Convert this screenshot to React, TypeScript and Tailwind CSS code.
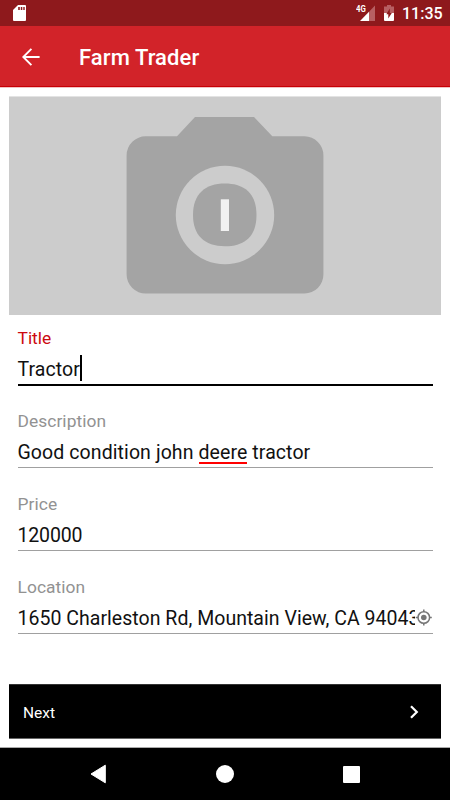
import React from "react";

function StatusBar() {
  return (
    <div className="flex h-[26px] shrink-0 items-start bg-[#8e191c] pl-[13px] pr-[9px]">
      <svg className="mt-[5px]" width="13" height="16" viewBox="0 0 13 16">
        <path d="M5 0H12Q13 0 13 1V15Q13 16 12 16H1Q0 16 0 15V5Z" fill="#fff" />
        <path d="M5.2 2H6.8V5H5.2ZM7.8 2H9.3V5H7.8ZM10.3 2H11.7V5H10.3Z" fill="#8e191c" />
      </svg>
      <div className="ml-auto flex">
        <div className="mt-[4px] w-[9px] shrink-0">
          <span className="block origin-left scale-x-[0.82] text-[9.5px] leading-[10px] font-bold">4G</span>
        </div>
        <svg className="-ml-[5px] mt-[5px]" width="15" height="16" viewBox="0 0 15 16">
          <path d="M15 0.5V16H9V6.7Z" fill="#b75f62" />
          <path d="M9 6.7V16H0Z" fill="#fff" />
        </svg>
        <svg className="ml-[9px] mt-[5px]" width="10" height="16" viewBox="0 0 10 16">
          <path d="M3 0H7V1.5H10V8H0V1.5H3Z" fill="#b75f62" />
          <path d="M0 8H10V15Q10 16 9 16H1Q0 16 0 15Z" fill="#fff" />
          <path d="M5.8 3.5V8H7.8L4.3 13.5V9.2H2.3Z" fill="#8e191c" />
        </svg>
        <span className="ml-[8px] mt-[4px] w-[39px] whitespace-nowrap text-[16px] leading-[20px] font-medium">11:35</span>
      </div>
    </div>
  );
}

function Header() {
  return (
    <header className="flex h-[61px] shrink-0 items-center border-b border-[#c70006] bg-[#d22329] pl-[22px] shadow-[0_1px_0_#f2c2c3]">
      <svg className="mt-px" width="18" height="18" viewBox="0 0 18 18" fill="none" stroke="#fff" strokeWidth="1.9">
        <path d="M17.6 9H1.2M9.4 .9L1.3 9L9.4 17.1" />
      </svg>
      <h1 className="ml-[39px] mt-[3px] whitespace-nowrap text-[22px] leading-[28px] font-medium tracking-[0.08px]">Farm Trader</h1>
    </header>
  );
}

function PhotoPlaceholder() {
  return (
    <div className="mx-[9px] mt-[10px] h-[218px] shrink-0 bg-[#ccc] shadow-[0_-1px_0_#e3e3e3]">
      <svg width="432" height="218" viewBox="9 97 432 218">
        <path
          d="M146 136.3H177L195 117H254L272.3 136.3H304.5A19 19 0 0 1 323.4 155.3V274.5A19 19 0 0 1 304.5 293.5H146A19 19 0 0 1 126.6 274.5V155.3A19 19 0 0 1 146 136.3Z"
          fill="#a4a4a4"
        />
        <circle cx="225" cy="215" r="49.2" fill="#ccc" />
        <path
          d="M225 183.5C245 183.5 256.5 194 256.5 215C256.5 235 246 246.2 225 246.2C204 246.2 193 235 193 215C193 194 205 183.5 225 183.5Z"
          fill="#a4a4a4"
        />
        <rect x="220.8" y="199.3" width="8.2" height="31.7" fill="#f1f1f1" />
      </svg>
    </div>
  );
}

function Field({ label, active = false, children }: { label: string; active?: boolean; children: React.ReactNode }) {
  return (
    <div className="h-[83px]">
      <div className={"h-[20px] text-[17.4px] leading-[20px] " + (active ? "text-[#cc0a10]" : "tracking-[0.05px] text-[#929292]")}>{label}</div>
      <div className={"mt-[7px] flex items-center text-[19.5px] leading-[28px] text-[#111] " + (active ? "h-[31px] border-b-2 border-black" : "h-[30px] border-b border-[#a0a0a0]")}>
        {children}
      </div>
    </div>
  );
}

export default function App() {
  return (
    <div className="flex h-[800px] w-[450px] flex-col overflow-hidden bg-white font-['Roboto',sans-serif] text-white">
      <StatusBar />
      <Header />
      <PhotoPlaceholder />
      <main className="mx-[17.5px] mt-[13px] h-[356px] shrink-0">
        <Field label="Title" active>
          <span className="tracking-[0.07px]">Tractor</span>
          <span className="-mt-[3px] h-[26px] w-[2px] bg-black" />
        </Field>
        <Field label="Description">
          <span className="whitespace-pre tracking-[0.09px]">
            Good condition john{" "}
            <span className="inline-block h-[25px] border-b-2 border-[#f00] align-top">deere</span>
            {" "}tractor
          </span>
        </Field>
        <Field label="Price"><span className="tracking-[-0.15px]">120000</span></Field>
        <Field label="Location">
          <span className="w-[397px] shrink-0 overflow-hidden whitespace-nowrap tracking-[0.03px]">1650 Charleston Rd, Mountain View, CA 94043</span>
          <svg className="-mt-[2px] shrink-0" width="17" height="17" viewBox="0 0 17 17" fill="none" stroke="#777" strokeWidth="1.5">
            <circle cx="8.8" cy="8.5" r="5.8" />
            <circle cx="8.8" cy="8.5" r="2.8" fill="#777" stroke="none" />
            <path d="M8.8 .5V3M8.8 14V16.5M.8 8.5H3.3M14.3 8.5H16.8" />
          </svg>
        </Field>
      </main>
      <button className="mx-[9px] flex h-[55px] shrink-0 items-center justify-between border-y border-t-[#333] border-b-[#666] bg-black pl-[14px] pr-[22px] text-left">
        <span className="pt-[2px] text-[15.5px] leading-[20px]">Next</span>
        <svg width="10" height="14" viewBox="0 0 10 14" fill="none" stroke="#fff" strokeWidth="2.2">
          <path d="M2 1.2L7.8 7L2 12.8" />
        </svg>
      </button>
      <nav className="mt-[8px] flex h-[53px] shrink-0 items-center justify-between border-t border-[#aaa] bg-black px-[90px]">
        <svg width="16" height="20" viewBox="0 0 16 20">
          <path d="M15.3 1.2V18.8L1 10Z" fill="#fff" stroke="#fff" strokeLinejoin="round" />
        </svg>
        <span className="size-[18px] rounded-full bg-white" />
        <span className="size-[17px] rounded-[1px] bg-white" />
      </nav>
    </div>
  );
}
